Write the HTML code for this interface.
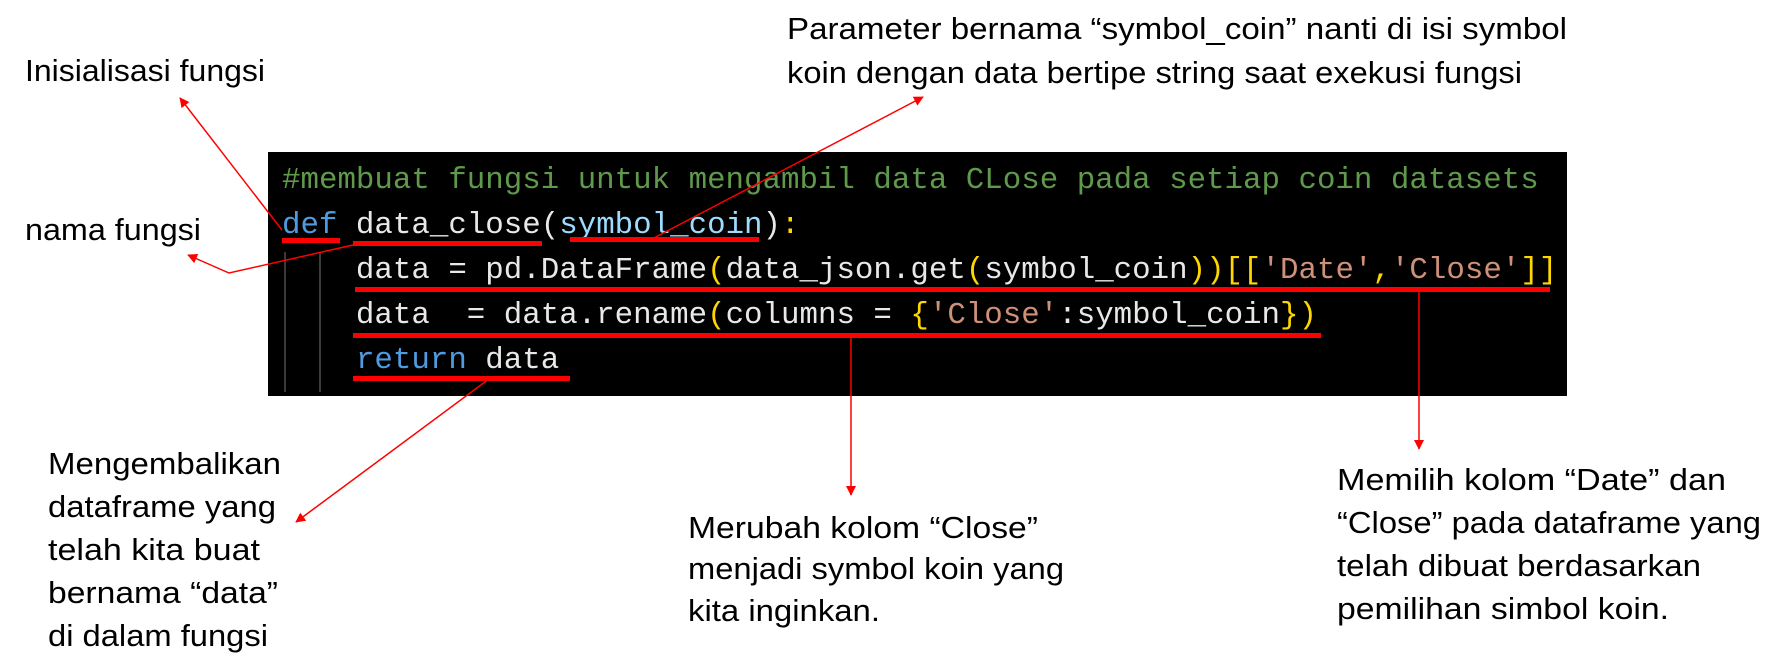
<!DOCTYPE html>
<html><head><meta charset="utf-8"><style>
html,body{margin:0;padding:0;background:#fff;width:1774px;height:665px;overflow:hidden}
svg{display:block}
.a{font-family:"Liberation Sans",sans-serif;font-size:31px;fill:#000}
.c{font-family:"Liberation Mono",monospace;font-size:30.8px;fill:#e8e8e8;white-space:pre}
</style></head><body>
<svg width="1774" height="665" viewBox="0 0 1774 665" xmlns="http://www.w3.org/2000/svg">
<defs><marker id="ar" markerWidth="10" markerHeight="10" refX="9" refY="5" orient="auto" markerUnits="userSpaceOnUse"><path d="M0,0 L18,5 L0,10 z" fill="#f00" transform="scale(0.55,1)"/></marker></defs>
<rect x="268" y="152" width="1299" height="244" fill="#000"/>
<line x1="285" y1="252" x2="285" y2="392" stroke="#3a3a3a" stroke-width="2"/>
<line x1="320" y1="252" x2="320" y2="392" stroke="#3a3a3a" stroke-width="2"/>
<text class="c" x="282" y="188" style="fill:#5f9a4c" xml:space="preserve">#membuat fungsi untuk mengambil data CLose pada setiap coin datasets</text>
<text class="c" x="282" y="233" xml:space="preserve"><tspan style="fill:#4f9be0">def</tspan> data_close(<tspan style="fill:#9cdcfe">symbol_coin</tspan>)<tspan style="fill:#ffd700">:</tspan></text>
<text class="c" x="282" y="278" xml:space="preserve">    data = pd.DataFrame<tspan style="fill:#ffd700">(</tspan>data_json.get<tspan style="fill:#ffd700">(</tspan>symbol_coin<tspan style="fill:#ffd700">))[[</tspan><tspan style="fill:#ce9178">'Date'</tspan><tspan style="fill:#ffd700">,</tspan><tspan style="fill:#ce9178">'Close'</tspan><tspan style="fill:#ffd700">]]</tspan></text>
<text class="c" x="282" y="323" xml:space="preserve">    data  = data.rename<tspan style="fill:#ffd700">(</tspan>columns = <tspan style="fill:#ffd700">{</tspan><tspan style="fill:#ce9178">'Close'</tspan>:symbol_coin<tspan style="fill:#ffd700">})</tspan></text>
<text class="c" x="282" y="368" xml:space="preserve">    <tspan style="fill:#4f9be0">return</tspan> data</text>
<g fill="#f00">
<rect x="282" y="238" width="58" height="5"/>
<rect x="353" y="241" width="189" height="5"/>
<rect x="570" y="237" width="189" height="5"/>
<rect x="355" y="287" width="1195" height="5"/>
<rect x="353" y="333" width="968" height="5"/>
<rect x="353" y="376" width="217" height="5"/>
</g>
<g stroke="#f00" stroke-width="1.5" fill="none">
<line x1="282" y1="230" x2="180" y2="98" marker-end="url(#ar)"/>
<polyline points="353,245 229,273 188,255" marker-end="url(#ar)"/>
<line x1="650" y1="240" x2="923" y2="97" marker-end="url(#ar)"/>
<line x1="489" y1="379" x2="296" y2="522" marker-end="url(#ar)"/>
<line x1="851" y1="336" x2="851" y2="495" marker-end="url(#ar)"/>
<line x1="1419" y1="292" x2="1419" y2="449" marker-end="url(#ar)"/>
</g>
<g class="a">
<text x="787" y="39" textLength="780" lengthAdjust="spacingAndGlyphs">Parameter bernama “symbol_coin” nanti di isi symbol</text>
<text x="787" y="83" textLength="735" lengthAdjust="spacingAndGlyphs">koin dengan data bertipe string saat exekusi fungsi</text>
<text x="25" y="81" textLength="240" lengthAdjust="spacingAndGlyphs">Inisialisasi fungsi</text>
<text x="25" y="240" textLength="176" lengthAdjust="spacingAndGlyphs">nama fungsi</text>
<text x="48" y="474" textLength="233" lengthAdjust="spacingAndGlyphs">Mengembalikan</text>
<text x="48" y="517" textLength="228" lengthAdjust="spacingAndGlyphs">dataframe yang</text>
<text x="48" y="560" textLength="212" lengthAdjust="spacingAndGlyphs">telah kita buat</text>
<text x="48" y="603" textLength="230" lengthAdjust="spacingAndGlyphs">bernama “data”</text>
<text x="48" y="646" textLength="220" lengthAdjust="spacingAndGlyphs">di dalam fungsi</text>
<text x="688" y="538" textLength="350" lengthAdjust="spacingAndGlyphs">Merubah kolom “Close”</text>
<text x="688" y="579" textLength="376" lengthAdjust="spacingAndGlyphs">menjadi symbol koin yang</text>
<text x="688" y="621" textLength="192" lengthAdjust="spacingAndGlyphs">kita inginkan.</text>
<text x="1337" y="490" textLength="389" lengthAdjust="spacingAndGlyphs">Memilih kolom “Date” dan</text>
<text x="1337" y="533" textLength="424" lengthAdjust="spacingAndGlyphs">“Close” pada dataframe yang</text>
<text x="1337" y="576" textLength="364" lengthAdjust="spacingAndGlyphs">telah dibuat berdasarkan</text>
<text x="1337" y="619" textLength="332" lengthAdjust="spacingAndGlyphs">pemilihan simbol koin.</text>
</g>
</svg>
</body></html>
